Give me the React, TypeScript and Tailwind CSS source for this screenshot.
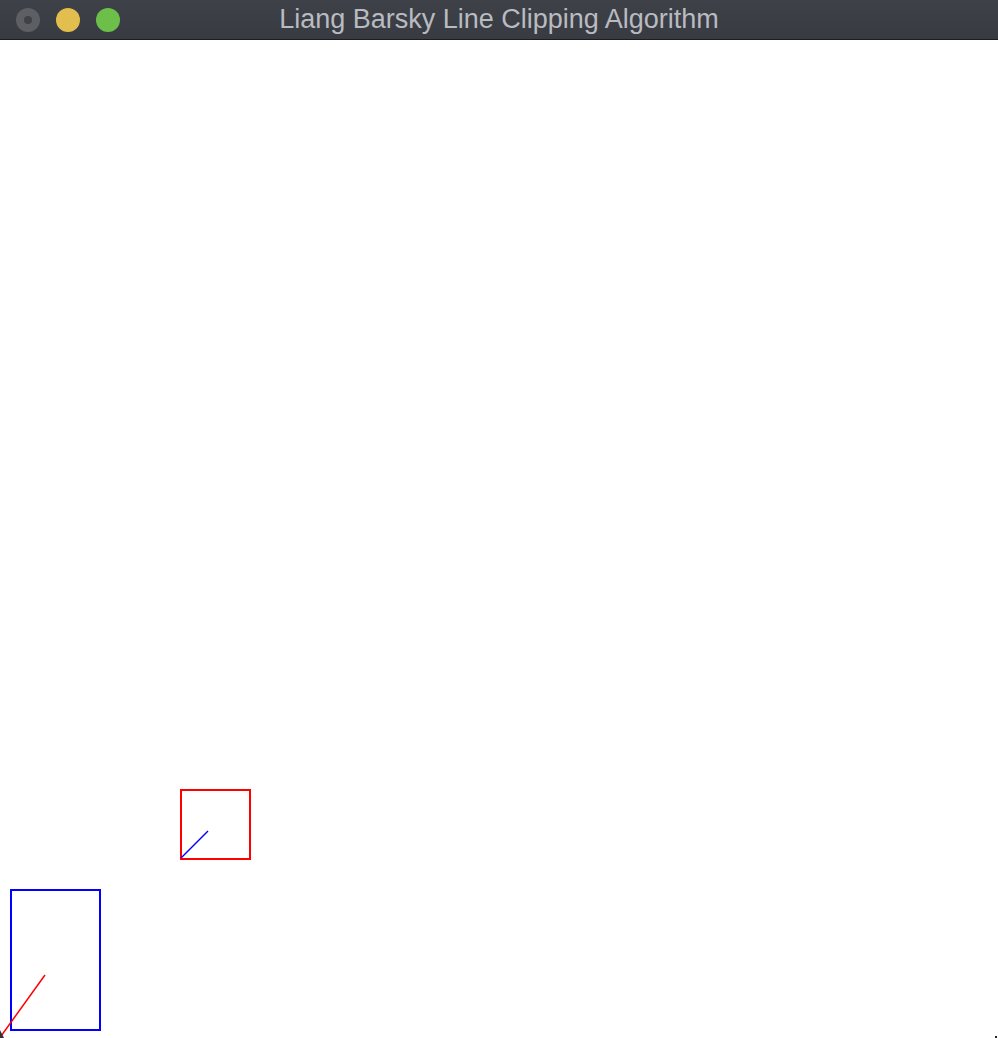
export default function App() {
  return (
    <div className="w-[998px] h-[1038px] flex flex-col bg-white overflow-hidden" style={{ fontFamily: "'Liberation Sans', Arial, sans-serif" }}>
      {/* Title bar */}
      <div className="relative h-[40px] shrink-0 flex items-center bg-gradient-to-b from-[#3e4148] to-[#383b42] border-b border-[#1c1d20]">
        <div className="flex items-center gap-[16px] pl-[16px]">
          <div className="w-[24px] h-[24px] rounded-full bg-[#5d5f64] flex items-center justify-center">
            <div className="w-[8px] h-[8px] rounded-full bg-[#3f4145]" />
          </div>
          <div className="w-[24px] h-[24px] rounded-full bg-[#e2be4e]" />
          <div className="w-[24px] h-[24px] rounded-full bg-[#6cc04a]" />
        </div>
        <div className="absolute inset-0 flex items-center justify-center text-[27px] leading-none text-[#b9bbc1] pointer-events-none">
          Liang Barsky Line Clipping Algorithm
        </div>
      </div>

      {/* Canvas */}
      <div className="flex-1 relative">
        <svg width="998" height="998" viewBox="0 0 998 998" className="block">
          <rect x="181" y="750" width="69" height="69" fill="none" stroke="#ff0000" strokeWidth="2" />
          <line x1="181" y1="818" x2="208" y2="791" stroke="#0000ff" strokeWidth="1.5" />
          <rect x="11" y="850" width="89" height="140" fill="none" stroke="#0000ff" strokeWidth="2" />
          <line x1="0" y1="997.5" x2="45" y2="935" stroke="#ff0000" strokeWidth="1.5" />
          <path d="M0 990 L4 998 L0 998 Z" fill="#333" />
          <rect x="995" y="996" width="2" height="2" fill="#222" />
        </svg>
      </div>
    </div>
  );
}
